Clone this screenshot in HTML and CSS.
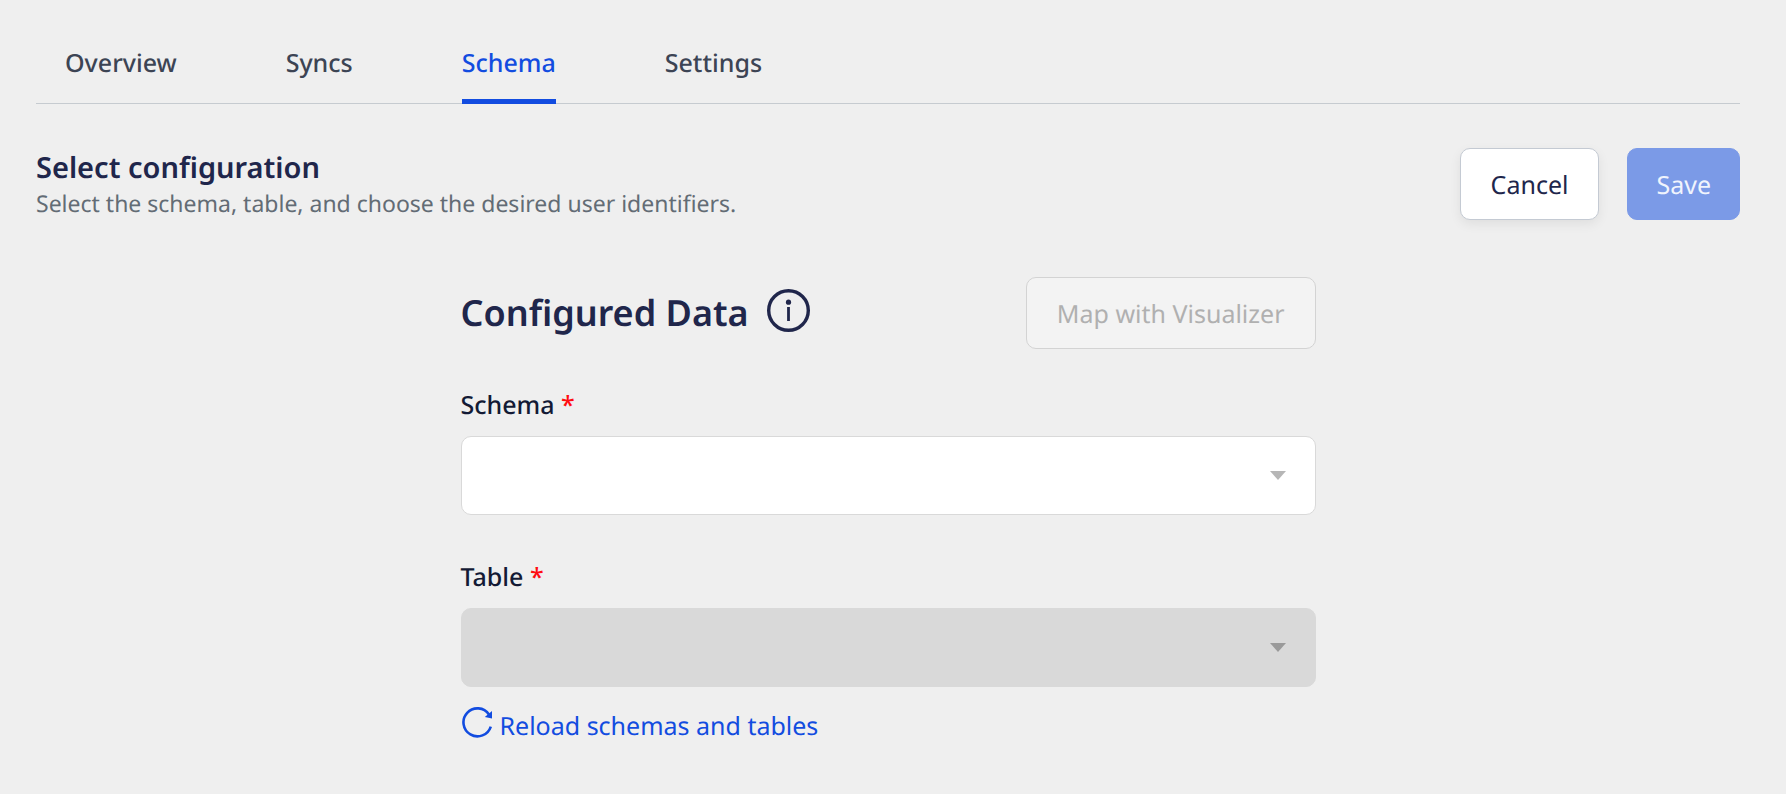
FILE: index.html
```html
<!DOCTYPE html>
<html lang="en">
<head>
<meta charset="utf-8">
<meta name="viewport" content="width=device-width, initial-scale=1">
<title>Schema configuration</title>
<link rel="stylesheet" href="styles.css">
</head>
<body>
<nav class="tabs" aria-label="Sections">
  <a class="tab" href="#overview">Overview</a>
  <a class="tab" href="#syncs">Syncs</a>
  <a class="tab tab-active" href="#schema" aria-current="page">Schema</a>
  <a class="tab" href="#settings">Settings</a>
</nav>
<main>
  <header class="page-header">
    <div>
      <h1 class="page-title">Select configuration</h1>
      <p class="page-subtitle">Select the schema, table, and choose the desired user identifiers.</p>
    </div>
    <div class="actions">
      <button class="button button-cancel" type="button">Cancel</button>
      <button class="button button-save" type="submit" form="config" disabled>Save</button>
    </div>
  </header>
  <form class="config" id="config">
    <div class="config-header">
      <div class="config-heading">
        <h2 class="config-title">Configured Data</h2>
        <svg class="info-icon" viewBox="0 0 43 43" role="img" aria-label="Information">
          <circle cx="21.5" cy="21.5" r="19.8" fill="none" stroke="currentColor" stroke-width="3.4"/>
          <circle cx="21.5" cy="13.2" r="2.6" fill="currentColor"/>
          <path d="M21.5 18v14" stroke="currentColor" stroke-width="2.8"/>
        </svg>
      </div>
      <button class="button button-map" type="button" disabled>Map with Visualizer</button>
    </div>
    <div class="field">
      <label class="label" for="schema">Schema <span class="required">*</span></label>
      <div class="select-box">
        <select class="select" id="schema" required><option></option></select>
        <svg class="caret" viewBox="0 0 16 9" aria-hidden="true"><path d="M0 0h16L8 9z" fill="currentColor"/></svg>
      </div>
    </div>
    <div class="field">
      <label class="label" for="table">Table <span class="required">*</span></label>
      <div class="select-box">
        <select class="select" id="table" required disabled><option></option></select>
        <svg class="caret caret-disabled" viewBox="0 0 16 9" aria-hidden="true"><path d="M0 0h16L8 9z" fill="currentColor"/></svg>
      </div>
    </div>
    <button class="reload" type="button">
      <svg class="reload-icon" viewBox="0 0 32 32" aria-hidden="true">
        <path d="M29.8 19.6A14 14 0 1 1 28 7.4" fill="none" stroke="currentColor" stroke-width="2.6"/>
        <path d="M31 4v7.6l-7.2-1.6z" fill="currentColor"/>
      </svg>
      <span>Reload schemas and tables</span>
    </button>
  </form>
</main>
</body>
</html>
```
FILE: styles.css
```css
* {
  box-sizing: border-box;
}

body {
  margin: 0;
  padding: 44px 46px 44px 36px;
  background: #efefef;
  color: #20264b;
  font-family: "Noto Sans", sans-serif;
  font-size: 25px;
  line-height: 38px;
  text-rendering: geometricPrecision;
}

h1,
h2,
p {
  margin: 0;
}

button,
select {
  font: inherit;
  text-rendering: inherit;
}

.tabs {
  display: flex;
  gap: 109px;
  padding-left: 29px;
  box-shadow: inset 0 -1px #c6cbd0;
}

.tab {
  padding-bottom: 17px;
  border-bottom: 5px solid transparent;
  color: #3c4454;
  font-weight: 500;
  text-decoration: none;
}

.tab-active {
  border-color: #124ce0;
  color: #124ce0;
}

.page-header {
  display: flex;
  align-items: center;
  justify-content: space-between;
  margin-top: 44px;
}

.page-title {
  font-size: 29px;
  font-weight: 600;
  line-height: 38px;
}

.page-subtitle {
  color: #636c75;
  font-size: 23px;
  line-height: 32px;
}

.actions {
  display: flex;
  gap: 28px;
}

.button {
  height: 72px;
  padding: 2px 30px 0;
  border: 1px solid transparent;
  border-radius: 10px;
}

.button-cancel {
  border-color: #c4cad3;
  background: #fff;
  color: #20264b;
  box-shadow: 0 4px 12px rgba(0, 0, 0, 0.07);
}

.button-save {
  padding: 2px 28px 0;
  border-color: #7b9ae7;
  background: #7b9ae7;
  color: #f0f4fd;
}

.button-map {
  border-color: #d3d3d3;
  background: #f3f3f3;
  color: #b0b0b0;
}

.config {
  max-width: 855px;
  margin: 57px auto 0;
}

.config-header {
  display: flex;
  align-items: center;
  justify-content: space-between;
  margin-bottom: 37px;
}

.config-heading {
  display: flex;
  gap: 18px;
}

.config-title {
  font-size: 36px;
  font-weight: 600;
  line-height: 48px;
}

.info-icon {
  width: 43px;
  height: 43px;
}

.field {
  display: grid;
  gap: 12px;
}

.field + .field {
  margin-top: 43px;
}

.label {
  color: #131a35;
  font-weight: 500;
}

.required {
  color: #ff0d12;
}

.select-box {
  display: grid;
  align-items: center;
}

.select,
.caret {
  grid-area: 1 / 1;
}

.select {
  width: 100%;
  height: 79px;
  padding: 0 64px 0 24px;
  appearance: none;
  border: 1px solid #d9d9d9;
  border-radius: 10px;
  background: #fff;
  color: #131a35;
}

.select:disabled {
  background: #d9d9d9;
  opacity: 1;
}

.caret {
  justify-self: end;
  width: 16px;
  height: 9px;
  margin-right: 30px;
  color: #b6b6b6;
  pointer-events: none;
}

.caret-disabled {
  color: #9a9a9a;
}

.reload {
  display: flex;
  gap: 7px;
  margin-top: 20px;
  padding: 0;
  border: 0;
  background: none;
  color: #124ce0;
}

.reload-icon {
  width: 32px;
  height: 32px;
}
```
